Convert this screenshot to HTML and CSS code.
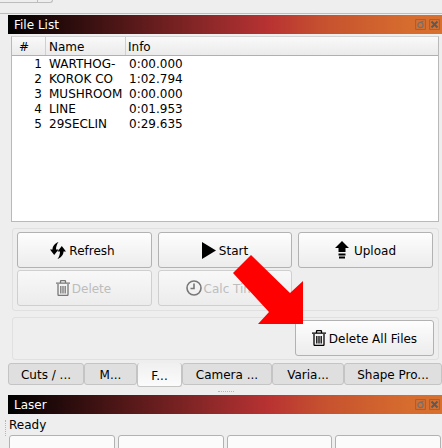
FILE: index.html
```html
<!DOCTYPE html>
<html lang="en">
<head>
    <meta charset="UTF-8">
    <title>File List</title>
    <link rel="stylesheet" href="styles.css">
</head>
<body>
    <div class="top-strip">
        <div class="top-buttons">
            <div class="top-button top-button-a"></div>
            <div class="top-button top-button-b"></div>
        </div>
    </div>

    <div class="titlebar">
        <span>File List</span>
        <div class="dock-icons">
            <svg width="11" height="11" viewBox="0 0 11 11"><rect x=".5" y=".5" width="10" height="10" rx="1" class="dock-line"/><circle cx="5.500" cy="6" r="2.600" class="dock-line"/><path d="M5 3.500 8.500 2" class="dock-line"/></svg>
            <svg width="11" height="11" viewBox="0 0 11 11"><rect x=".5" y=".5" width="10" height="10" rx="1" class="dock-line"/><path d="M2.500 2.500l6 6M8.500 2.500l-6 6" class="dock-x"/></svg>
        </div>
    </div>

    <div class="file-table">
        <div class="table-head">
            <div class="head-cell col-num">#</div>
            <div class="head-cell col-name">Name</div>
            <div class="head-cell col-info">Info</div>
        </div>
        <div class="table-row"><div class="col-num num">1</div><div class="col-name">WARTHOG-</div><div class="col-info">0:00.000</div></div>
        <div class="table-row"><div class="col-num num">2</div><div class="col-name">KOROK CO</div><div class="col-info">1:02.794</div></div>
        <div class="table-row"><div class="col-num num">3</div><div class="col-name">MUSHROOM</div><div class="col-info">0:00.000</div></div>
        <div class="table-row"><div class="col-num num">4</div><div class="col-name">LINE</div><div class="col-info">0:01.953</div></div>
        <div class="table-row"><div class="col-num num">5</div><div class="col-name">29SECLIN</div><div class="col-info">0:29.635</div></div>
    </div>

    <div class="group">
        <div class="btn-grid">
            <button class="btn btn-refresh">
                <svg width="16" height="17" viewBox="0 0 16 17"><path d="M0 7.500H2.500C2.500 4 5 1.500 8.500 0 7 2 6 4.500 6 7.500H8.500L4.200 13z" class="fill-black"/><path d="M16 9.500H13.500C13.500 13 11 15.500 7.500 17 9 15 10 12.500 10 9.500H7.500L11.800 4z" class="fill-black"/></svg>
                Refresh
            </button>
            <button class="btn">
                <svg width="14" height="17" viewBox="0 0 14 17"><path d="M0 0 14 8.500 0 17z" class="fill-black"/></svg>
                Start
            </button>
            <button class="btn btn-upload">
                <svg width="14" height="18" viewBox="0 0 14 18"><path d="M7 0 14 7H10.500V11H3.500V7H0z" class="fill-black"/><path d="M3.500 12.500h7v2h-7zM4 15.500h6v2H4z" class="fill-black"/></svg>
                Upload
            </button>
            <button class="btn off">
                <svg width="14" height="16" viewBox="0 0 14 16"><path d="M4.500 3V1.500a1 1 0 0 1 1-1h3a1 1 0 0 1 1 1V3M0 3.200H14M2 4v10.500a1 1 0 0 0 1 1h8a1 1 0 0 0 1-1V4M4.800 6v7.500M7 6v7.500M9.200 6v7.500" class="trash trash-grey"/></svg>
                Delete
            </button>
            <button class="btn off">
                <svg width="16" height="16" viewBox="0 0 16 16"><circle cx="8" cy="8" r="7" class="clock"/><path d="M8 3.500V8.500H4.500" class="clock"/></svg>
                Calc Time
            </button>
        </div>
    </div>

    <div class="group group-low">
        <button class="btn btn-all">
            <svg width="14" height="16" viewBox="0 0 14 16"><path d="M4.500 3V1.500a1 1 0 0 1 1-1h3a1 1 0 0 1 1 1V3M0 3.200H14M2 4v10.500a1 1 0 0 0 1 1h8a1 1 0 0 0 1-1V4M4.800 6v7.500M7 6v7.500M9.200 6v7.500" class="trash trash-black"/></svg>
            Delete All Files
        </button>
    </div>

    <div class="tabs">
        <div class="tab tab-cuts">Cuts / ...</div>
        <div class="tab tab-m">M...</div>
        <div class="tab tab-f active">F...</div>
        <div class="tab tab-camera">Camera ...</div>
        <div class="tab tab-varia">Varia...</div>
        <div class="tab tab-shape">Shape Pro...</div>
    </div>
    <div class="split-handle"></div>

    <div class="titlebar titlebar-laser">
        <span>Laser</span>
        <div class="dock-icons">
            <svg width="11" height="11" viewBox="0 0 11 11"><rect x=".5" y=".5" width="10" height="10" rx="1" class="dock-line"/><circle cx="5.500" cy="6" r="2.600" class="dock-line"/><path d="M5 3.500 8.500 2" class="dock-line"/></svg>
            <svg width="11" height="11" viewBox="0 0 11 11"><rect x=".5" y=".5" width="10" height="10" rx="1" class="dock-line"/><path d="M2.500 2.500l6 6M8.500 2.500l-6 6" class="dock-x"/></svg>
        </div>
    </div>
    <div class="status">Ready</div>
    <div class="laser-row">
        <div class="laser-btn"></div>
        <div class="laser-btn"></div>
        <div class="laser-btn"></div>
        <div class="laser-btn"></div>
    </div>
    <div class="side-handle"></div>

    <!-- red annotation arrow on top of the screenshot -->
    <svg class="arrow" width="442" height="448" viewBox="0 0 442 448"><path d="M251 255 233 273 269 312 258 324H303V281L290 293z" fill="#ff0000"/></svg>
</body>
</html>
```

FILE: styles.css
```css
html,
body {
  margin: 0;
  padding: 0;
}

body {
  width: 442px;
  height: 448px;
  overflow: hidden;
  position: relative;
  background-color: #eeeeee;
  font-family: "DejaVu Sans", sans-serif;
  font-size: 12px;
  color: #000;
}

.top-strip {
  height: 13px;
  border-bottom: 1px solid #bdbdbd;
}

.top-buttons {
  display: flex;
}

.top-button {
  height: 2px;
  border-bottom: 1px solid #bdbdbd;
  border-right: 1px solid #bdbdbd;
}

.top-button-a {
  width: 37px;
}

.top-button-b {
  width: 14px;
  border-bottom-right-radius: 3px;
}

.titlebar {
  margin: 1px 0 0 8px;
  height: 19px;
  padding: 0 2px 0 6px;
  display: flex;
  align-items: center;
  justify-content: space-between;
  color: #fff;
  background: linear-gradient(90deg, #000 0%, #962a2b 49%, #b83232 60%, #c5502f 72%, #d66c2e 92%, #d8702e 100%);
}

.dock-icons {
  display: flex;
  gap: 3px;
}

.dock-line {
  fill: none;
  stroke: #736f6b;
  stroke-width: 1.200;
}

.dock-x {
  fill: none;
  stroke: #5c5a58;
  stroke-width: 2;
}

.file-table {
  margin: 2px 3px 0 11px;
  height: 184px;
  background: #fff;
  border: 1px solid #b9b9b9;
  border-top-color: #d4d4d4;
}

.table-head {
  display: flex;
  height: 18px;
  background: linear-gradient(#f9f9f9, #ebebeb);
  border-bottom: 1px solid #b0b0b0;
  margin-bottom: 1px;
}

.head-cell {
  line-height: 20px;
  border-right: 1px solid #d0d0d0;
}

.table-row {
  display: flex;
  height: 15px;
  line-height: 15px;
}

.col-num {
  width: 34px;
  box-sizing: border-box;
  padding-left: 7px;
}

.col-name {
  width: 80px;
  padding-left: 3px;
  box-sizing: border-box;
}

.col-info {
  flex: 1;
  padding-left: 2px;
  box-sizing: border-box;
}

.head-cell.col-info {
  border-right: 0;
}

.table-row .col-info {
  padding-left: 3px;
}

.num {
  padding: 0 4px 0 0;
  text-align: right;
}

.group {
  margin: 6px 3px 0 12px;
  height: 83px;
  box-sizing: border-box;
  border: 1px solid #e0e0e0;
  border-radius: 3px;
  padding: 3px 4px;
}

.btn-grid {
  display: grid;
  grid-template-columns: 135px 134px 135px;
  column-gap: 6px;
  row-gap: 2px;
  grid-auto-rows: 36px;
}

.btn {
  display: flex;
  align-items: center;
  justify-content: center;
  gap: 3px;
  margin: 0;
  padding: 2px 0 0 0;
  font-family: inherit;
  font-size: 12px;
  color: #000;
  background: linear-gradient(#fdfdfd, #ececec);
  border: 1px solid #b2b2b2;
  border-radius: 3px;
}

.btn svg {
  margin-top: -2px;
}

.btn-refresh {
  padding-right: 4px;
}

.btn-upload {
  gap: 5px;
}

.btn.off {
  gap: 2px;
  padding-right: 2px;
  color: #bdbdbd;
  background: linear-gradient(#f8f8f8, #ececec);
  border-color: #cfcfcf;
}

.fill-black {
  fill: #000;
}

.trash {
  fill: none;
  stroke-width: 1.300;
}

.trash-black {
  stroke: #000;
}

.trash-grey {
  stroke: #777;
}

.clock {
  fill: none;
  stroke: #777;
  stroke-width: 1.600;
}

.group-low {
  margin-top: 6px;
  height: 43px;
  padding: 2px 4px 0 0;
  display: flex;
  justify-content: flex-end;
}

.btn-all {
  width: 139px;
  height: 36px;
  box-sizing: border-box;
}

.tabs {
  display: flex;
  align-items: flex-start;
  margin: 3px 0 0 8px;
  height: 24px;
}

.tab {
  box-sizing: border-box;
  height: 22px;
  line-height: 22px;
  text-align: center;
  background: #dfdfdf;
  border: 1px solid #c4c4c4;
  border-radius: 3px;
}

.tab.active {
  height: 24px;
  line-height: 26px;
  background: linear-gradient(#f0f0f0, #fbfbfb);
  border-top: 0;
}

.tab-cuts { width: 76px; }
.tab-m { width: 53px; }
.tab-f { width: 45px; }
.tab-camera { width: 90px; }
.tab-varia { width: 72px; }
.tab-shape { width: 98px; }

.split-handle {
  width: 16px;
  height: 0;
  margin: 4px 0 0 218px;
  border-top: 1px dotted #b5b5b5;
}

.titlebar-laser {
  margin-top: 3px;
}

.status {
  margin: 4px 0 0 9px;
  line-height: 15px;
}

.laser-row {
  display: flex;
  gap: 3px;
  margin: 2px 1px 0 9px;
}

.laser-btn {
  flex: 1;
  height: 30px;
  background: #fbfbfb;
  border: 1px solid #b2b2b2;
  border-radius: 3px;
}

.side-handle {
  position: absolute;
  left: 5px;
  top: 420px;
  height: 16px;
  border-left: 1px dotted #b5b5b5;
}

.arrow {
  position: absolute;
  left: 0;
  top: 0;
}
```
